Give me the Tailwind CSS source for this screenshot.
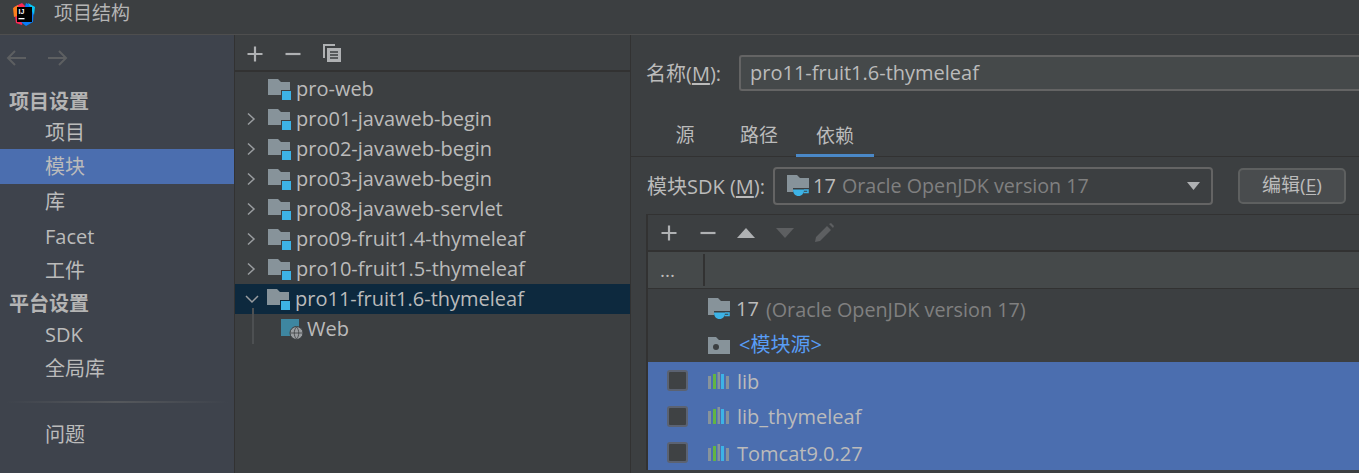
<!DOCTYPE html>
<html lang="zh">
<head>
    <meta charset="UTF-8">
    <title>项目结构</title>
    <script src="https://cdn.jsdelivr.net/npm/@tailwindcss/browser@4"></script>
</head>
<body class="h-[473px] w-[1359px] overflow-hidden bg-[#3c3f41] text-[#bbbbbb] text-[20px] font-['Open_Sans','Noto_Sans_CJK_SC',sans-serif]">
    <svg class="hidden">
        <symbol id="module" viewBox="0 0 28 22">
            <path d="M0 1h10l3 3h9v8H13v5H0z" fill="#87939a"/>
            <rect x="14" y="13" width="9" height="9" fill="#3db3e6"/>
        </symbol>
        <symbol id="sdk" viewBox="0 0 24 22">
            <path d="M0 0h10l3 3h9v10H6v4H0z" fill="#87939a"/>
            <path d="M6 14.500h11c0 4-2 6.500-5.500 6.500S6 18.500 6 14.500z" fill="#3db3e6"/>
            <path d="M17 15h4v2.500h-4.500" fill="none" stroke="#3db3e6" stroke-width="1.500"/>
        </symbol>
        <symbol id="lib" viewBox="0 0 22 18">
            <rect x="0" y="4" width="3" height="13" fill="#87939a"/>
            <rect x="5" y="2" width="3" height="15" fill="#62b543"/>
            <rect x="9.500" y="0" width="2.500" height="17" fill="#87939a"/>
            <rect x="13" y="2" width="3" height="15" fill="#3db3e6"/>
            <rect x="18" y="4" width="3" height="13" fill="#87939a"/>
        </symbol>
        <symbol id="chev" viewBox="0 0 12 14">
            <path d="M2 1.500l6 5.500-6 5.500" fill="none" stroke="#9a9da0" stroke-width="1.500"/>
        </symbol>
    </svg>

    <!-- Title bar -->
    <div class="h-[35px] flex items-center border-b border-[#4e4e4e]">
        <svg class="ml-[12px] w-[24px] h-[25px] -mt-[6px]" viewBox="0 0 24 25">
            <path d="M2 5l8-4 3 3-3 19-6-2z" fill="#fe2857"/>
            <path d="M14 1l8 4-1 15-7 4-5-4z" fill="#087cfa"/>
            <path d="M16 1l7 4-1 8z" fill="#07c3f2"/>
            <path d="M1 6l5-3 2 10-6 2z" fill="#fc801d"/>
            <rect x="5" y="5" width="15" height="15" fill="#000"/>
            <text x="6.500" y="12" fill="#fff" font-size="7" font-weight="700" font-family="Liberation Sans">IJ</text>
            <rect x="6.500" y="16" width="6" height="1.300" fill="#fff"/>
        </svg>
        <span class="ml-[18px] -mt-[8px] text-[19px] text-[#b4b4b4]">项目结构</span>
    </div>

    <div class="flex h-[438px]">
        <!-- Sidebar -->
        <div class="w-[235px] shrink-0 bg-[#3e434c] border-r border-[#323232] flex flex-col">
            <div class="h-[46px] flex items-center pl-[6px] gap-[20px] pb-[1px]">
                <svg class="w-[21px] h-[16px]" viewBox="0 0 21 16"><path d="M20 8H2M9 1L2 8l7 7" fill="none" stroke="#5d5f61" stroke-width="2"/></svg>
                <svg class="w-[21px] h-[16px]" viewBox="0 0 21 16"><path d="M1 8h18M12 1l7 7-7 7" fill="none" stroke="#5d5f61" stroke-width="2"/></svg>
            </div>
            <div class="h-[40px] pt-[2px] flex items-center pl-[9px] font-bold text-[#b4b4b4]">项目设置</div>
            <div class="h-[28px] -mt-[2px] flex items-center pl-[45px]">项目</div>
            <div class="h-[35px] mt-[2px] flex items-center pl-[45px] bg-[#4b6eaf]">模块</div>
            <div class="h-[35px] flex items-center pl-[45px]">库</div>
            <div class="h-[35px] flex items-center pl-[45px]">Facet</div>
            <div class="h-[34px] flex items-center pl-[45px]">工件</div>
            <div class="h-[30px] pt-[2px] flex items-center pl-[9px] font-bold text-[#b4b4b4]">平台设置</div>
            <div class="h-[34px] flex items-center pl-[45px]">SDK</div>
            <div class="h-[34px] flex items-center pl-[45px]">全局库</div>
            <div class="h-[32px] flex items-center pl-[6px] pr-[6px]">
                <div class="h-[2px] w-full bg-gradient-to-r from-transparent via-[#55585c] to-transparent"></div>
            </div>
            <div class="h-[34px] flex items-center pl-[45px]">问题</div>
        </div>

        <!-- Module tree -->
        <div class="w-[396px] shrink-0 border-r border-[#323232] flex flex-col">
            <div class="h-[37px] shrink-0 border-b-2 border-[#323232] flex items-center pl-[12px] pt-[2px] gap-[22px]">
                <svg class="w-[16px] h-[16px]" viewBox="0 0 16 16"><path d="M8 0.500v15M0.500 8h15" stroke="#afb1b3" stroke-width="2.200"/></svg>
                <svg class="w-[16px] h-[16px]" viewBox="0 0 16 16"><path d="M0.500 8h15" stroke="#afb1b3" stroke-width="2.200"/></svg>
                <svg class="w-[19px] h-[19px]" viewBox="0 0 19 19">
                    <path d="M1 14V1h11" fill="none" stroke="#afb1b3" stroke-width="2"/>
                    <rect x="4" y="4" width="14" height="14" fill="#afb1b3"/>
                    <path d="M7 8h8M7 11h8M7 14h8" stroke="#3c3f41" stroke-width="1.300"/>
                </svg>
            </div>
            <div class="pt-[2px]">
                <div class="h-[30px] flex items-center pl-[33px]"><svg class="w-[28px] h-[22px]"><use href="#module"/></svg>pro-web</div>
                <div class="h-[30px] flex items-center pl-[11px]"><svg class="w-[12px] h-[14px] mr-[10px]"><use href="#chev"/></svg><svg class="w-[28px] h-[22px]"><use href="#module"/></svg>pro01-javaweb-begin</div>
                <div class="h-[30px] flex items-center pl-[11px]"><svg class="w-[12px] h-[14px] mr-[10px]"><use href="#chev"/></svg><svg class="w-[28px] h-[22px]"><use href="#module"/></svg>pro02-javaweb-begin</div>
                <div class="h-[30px] flex items-center pl-[11px]"><svg class="w-[12px] h-[14px] mr-[10px]"><use href="#chev"/></svg><svg class="w-[28px] h-[22px]"><use href="#module"/></svg>pro03-javaweb-begin</div>
                <div class="h-[30px] flex items-center pl-[11px]"><svg class="w-[12px] h-[14px] mr-[10px]"><use href="#chev"/></svg><svg class="w-[28px] h-[22px]"><use href="#module"/></svg>pro08-javaweb-servlet</div>
                <div class="h-[30px] flex items-center pl-[11px]"><svg class="w-[12px] h-[14px] mr-[10px]"><use href="#chev"/></svg><svg class="w-[28px] h-[22px]"><use href="#module"/></svg>pro09-fruit1.4-thymeleaf</div>
                <div class="h-[30px] flex items-center pl-[11px]"><svg class="w-[12px] h-[14px] mr-[10px]"><use href="#chev"/></svg><svg class="w-[28px] h-[22px]"><use href="#module"/></svg>pro10-fruit1.5-thymeleaf</div>
                <div class="h-[30px] flex items-center pl-[11px] bg-[#0d293e]">
                    <svg class="w-[14px] h-[12px] mr-[8px] -ml-[1px]" viewBox="0 0 14 12"><path d="M1 3l6 6 6-6" fill="none" stroke="#9a9da0" stroke-width="1.500"/></svg>
                    <svg class="w-[28px] h-[22px]"><use href="#module"/></svg>pro11-fruit1.6-thymeleaf
                </div>
                <div class="h-[30px] flex items-center pl-[17px]">
                    <div class="w-[2px] h-[36px] -mt-[6px] bg-[#4d5052]"></div>
                    <svg class="ml-[27px] w-[23px] h-[22px] mr-[3px]" viewBox="0 0 23 22">
                        <rect x="0" y="1" width="18" height="17" fill="#3e86a0"/>
                        <circle cx="15.500" cy="15" r="6.500" fill="#9a9da0" stroke="#3c3f41"/>
                        <path d="M9.500 15h12M15.500 9c-3 3-3 9 0 12M15.500 9c3 3 3 9 0 12" fill="none" stroke="#3c3f41" stroke-width="0.800"/>
                    </svg>Web
                </div>
            </div>
        </div>

        <!-- Module details -->
        <div class="flex-1 min-w-0 flex flex-col">
            <div class="h-[75px] shrink-0 flex items-center pl-[15px]">
                <span class="w-[93px] pt-[3px]">名称(<span class="underline underline-offset-2">M</span>):</span>
                <div class="flex-1 h-[36px] bg-[#45494a] border-y-2 border-l-2 border-[#646464] rounded-l-[3px] flex items-center pl-[9px]">pro11-fruit1.6-thymeleaf</div>
            </div>
            <div class="h-[47px] shrink-0 border-b border-[#323232] flex items-end pl-[17px] text-[19px]">
                <div class="w-[74px] h-[47px] pt-[5px] flex items-center justify-center">源</div>
                <div class="w-[74px] h-[47px] pt-[5px] flex items-center justify-center">路径</div>
                <div class="w-[78px] h-[47px] pt-[8px] flex items-center justify-center border-b-[3px] border-[#4a88c7] -mb-[1px]">依赖</div>
            </div>
            <div class="h-[57px] shrink-0 flex items-center pl-[16px]">
                <span class="w-[126px] pt-[2px]">模块SDK (<span class="underline underline-offset-2">M</span>):</span>
                <div class="w-[440px] h-[38px] border-2 border-[#646464] rounded-[4px] flex items-center pl-[12px] pr-[10px]">
                    <svg class="w-[24px] h-[22px] mr-[2px]"><use href="#sdk"/></svg>
                    <span>17</span><span class="ml-[6px] text-[19.7px] text-[#808080]">Oracle OpenJDK version 17</span>
                    <svg class="ml-auto w-[14px] h-[8px]" viewBox="0 0 14 8"><path d="M0 0h13L6.500 8z" fill="#afb1b3"/></svg>
                </div>
                <div class="ml-[25px] w-[108px] h-[36px] rounded-[5px] border-2 border-[#5e6060] bg-[#494c4e] flex items-center justify-center text-[19px]">编辑(<span class="underline underline-offset-2">E</span>)</div>
            </div>
            <div class="flex-1 min-h-0 ml-[15px] mb-[3px] border-l-2 border-t border-[#323232] flex flex-col">
                <div class="h-[37px] shrink-0 border-b-2 border-[#323232] flex items-center pl-[13px]">
                    <svg class="w-[16px] h-[16px]" viewBox="0 0 16 16"><path d="M8 0.500v15M0.500 8h15" stroke="#afb1b3" stroke-width="2.200"/></svg>
                    <svg class="ml-[23px] w-[16px] h-[16px]" viewBox="0 0 16 16"><path d="M0.500 8h15" stroke="#afb1b3" stroke-width="2.200"/></svg>
                    <svg class="ml-[21px] w-[18px] h-[10px]" viewBox="0 0 18 10"><path d="M0 10h18L9 0z" fill="#afb1b3"/></svg>
                    <svg class="ml-[21px] w-[18px] h-[10px]" viewBox="0 0 18 10"><path d="M0 0h18L9 10z" fill="#5d5f61"/></svg>
                    <svg class="ml-[20px] w-[21px] h-[20px]" viewBox="0 0 21 20"><path d="M1 19l1-5L13 3l4 4L6 18zM15 1l2-1 3 3-1 2z" fill="#5d5f61"/></svg>
                </div>
                <div class="h-[37px] shrink-0 bg-[#45494a] border-b border-[#323232] flex items-stretch">
                    <div class="w-[57px] border-r-2 border-[#323232] my-[2px] pl-[12px] flex items-center text-[19px] leading-none">...</div>
                </div>
                <div class="h-[36px] flex items-center pl-[60px] pt-[3px] mt-[1px]"><svg class="w-[24px] h-[22px] mr-[4px]"><use href="#sdk"/></svg>17<span class="ml-[7px] text-[19.8px] text-[#808080]">(Oracle OpenJDK version 17)</span></div>
                <div class="h-[36px] flex items-center pl-[60px] pt-[3px]">
                    <svg class="w-[22px] h-[17px] mr-[9px]" viewBox="0 0 22 17"><path d="M0 0h8l3 3h11v14H0z" fill="#87939a"/><circle cx="8" cy="10" r="3" fill="#3c3f41"/></svg>
                    <span class="text-[#589df6]">&lt;模块源&gt;</span>
                </div>
                <div class="h-[36px] bg-[#4b6eaf] flex items-center pl-[19px] pt-[2px]"><div class="w-[21px] h-[21px] rounded-[3px] bg-[#3f4244] border-2 border-[#5b6271]"></div><svg class="ml-[20px] w-[22px] h-[18px] mr-[7px]"><use href="#lib"/></svg><span class="pt-[2px]">lib</span></div>
                <div class="h-[36px] bg-[#4b6eaf] flex items-center pl-[19px] pt-[2px]"><div class="w-[21px] h-[21px] rounded-[3px] bg-[#3f4244] border-2 border-[#5b6271]"></div><svg class="ml-[20px] w-[22px] h-[18px] mr-[7px]"><use href="#lib"/></svg><span class="pt-[2px]">lib_thymeleaf</span></div>
                <div class="h-[37px] bg-[#4b6eaf] flex items-center pl-[19px] pt-[2px]"><div class="w-[21px] h-[21px] rounded-[3px] bg-[#3f4244] border-2 border-[#5b6271]"></div><svg class="ml-[20px] w-[22px] h-[18px] mr-[7px]"><use href="#lib"/></svg><span class="pt-[2px]">Tomcat9.0.27</span></div>
            </div>
        </div>
    </div>
</body>
</html>
